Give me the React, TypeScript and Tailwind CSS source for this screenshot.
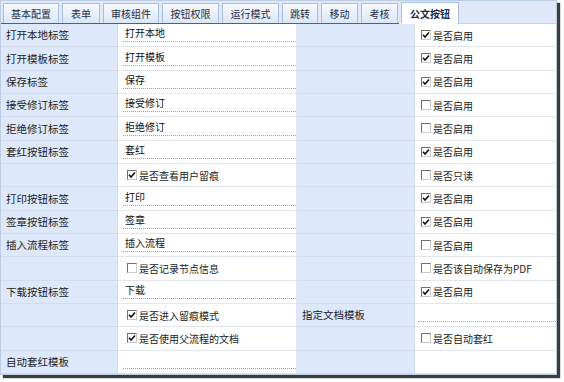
import React from 'react';

type Cell =
  | { kind: 'label'; text: string }
  | { kind: 'input'; value: string }
  | { kind: 'check'; text: string; checked: boolean }
  | { kind: 'empty' };

interface Row {
  label: string;
  main: Cell;
  side: Cell;
  extra: Cell;
}

const tabs = ['基本配置', '表单', '审核组件', '按钮权限', '运行模式', '跳转', '移动', '考核', '公文按钮'];
const tabWidths = ['w-[56px]', 'w-[38px]', 'w-[56px]', 'w-[57px]', 'w-[57px]', 'w-[36px]', 'w-[37px]', 'w-[37px]', 'w-[58px]'];

const en = (text: string): Cell => ({ kind: 'check', text, checked: true });
const dis = (text: string): Cell => ({ kind: 'check', text, checked: false });
const inp = (value: string): Cell => ({ kind: 'input', value });
const empty: Cell = { kind: 'empty' };

const rows: Row[] = [
  { label: '打开本地标签', main: inp('打开本地'), side: empty, extra: en('是否启用') },
  { label: '打开模板标签', main: inp('打开模板'), side: empty, extra: en('是否启用') },
  { label: '保存标签', main: inp('保存'), side: empty, extra: en('是否启用') },
  { label: '接受修订标签', main: inp('接受修订'), side: empty, extra: dis('是否启用') },
  { label: '拒绝修订标签', main: inp('拒绝修订'), side: empty, extra: dis('是否启用') },
  { label: '套红按钮标签', main: inp('套红'), side: empty, extra: en('是否启用') },
  { label: '', main: en('是否查看用户留痕'), side: empty, extra: dis('是否只读') },
  { label: '打印按钮标签', main: inp('打印'), side: empty, extra: en('是否启用') },
  { label: '签章按钮标签', main: inp('签章'), side: empty, extra: en('是否启用') },
  { label: '插入流程标签', main: inp('插入流程'), side: empty, extra: dis('是否启用') },
  { label: '', main: dis('是否记录节点信息'), side: empty, extra: dis('是否该自动保存为PDF') },
  { label: '下载按钮标签', main: inp('下载'), side: empty, extra: en('是否启用') },
  { label: '', main: en('是否进入留痕模式'), side: { kind: 'label', text: '指定文档模板' }, extra: inp('') },
  { label: '', main: en('是否使用父流程的文档'), side: empty, extra: dis('是否自动套红') },
  { label: '自动套红模板', main: inp(''), side: empty, extra: empty },
];

function CheckBox({ checked }: { checked: boolean }) {
  return (
    <span className="w-[10px] h-[10px] shrink-0 bg-white border border-t-[#6f6f6f] border-l-[#6f6f6f] border-r-[#c9c9c9] border-b-[#c9c9c9] flex items-center justify-center">
      {checked && (
        <svg width="8" height="8" viewBox="0 0 8 8">
          <path d="M1 3.8 L3 6 L7 1.5" stroke="#111" strokeWidth="1.6" fill="none" />
        </svg>
      )}
    </span>
  );
}

function CellBody({ cell, wide }: { cell: Cell; wide?: boolean }) {
  if (cell.kind === 'label') {
    return <span className="pl-[5px] text-[10.5px] text-[#222]">{cell.text}</span>;
  }
  if (cell.kind === 'input') {
    return (
      <div className={`${wide ? 'ml-[5px]' : 'ml-[3px]'} self-end mb-[4px] flex-1 h-[17px] border-b border-dotted border-[#8aa3c7] pl-[2px] text-[10px] leading-[16px] text-[#111]`}>
        {cell.value}
      </div>
    );
  }
  if (cell.kind === 'check') {
    return (
      <div className={`${wide ? 'pl-[9px]' : 'pl-[6px]'} flex items-center gap-[2px] text-[10px] text-[#222]`}>
        <CheckBox checked={cell.checked} />
        <span>{cell.text}</span>
      </div>
    );
  }
  return null;
}

export default function App() {
  return (
    <div className="w-[564px] h-[382px] bg-white" style={{ fontFamily: '"Noto Sans CJK SC", "Liberation Sans", sans-serif' }}>
      <div className="w-[557px] border border-[#bccde6] shadow-[3px_3px_1px_#3c3c3c]">
        {/* onglets */}
        <div className="h-[22px] bg-[#dfe8f6] flex items-end gap-[3px] pl-[2px]">
          {tabs.map((t, i) => {
            const active = i === tabs.length - 1;
            return (
              <div
                key={t}
                className={`${tabWidths[i]} ${
                  active
                    ? 'h-[21px] bg-white font-bold text-[#1b2c48] border-[#a8bfdf]'
                    : 'h-[20px] bg-gradient-to-b from-[#f7f9fd] to-[#dbe6f5] text-[#1f2f48] border-[#a8bfdf]'
                } border border-b-0 flex items-center justify-center text-[10px]`}
              >
                {t}
              </div>
            );
          })}
        </div>
        <div className="flex h-px">
          <div className="w-[398px] bg-[#5f5f5f]" />
          <div className="w-[58px] bg-white" />
          <div className="flex-1 bg-[#c3d3ea]" />
        </div>

        {/* tableau */}
        <div className="grid grid-cols-[117px_179px_118px_1fr] grid-rows-[repeat(15,minmax(0,1fr))] h-[350px]">
          {rows.map((r, i) => (
            <React.Fragment key={i}>
              <div className="bg-[#dde8fb] border-b border-r border-[#d3dce8] flex items-center">
                {r.label && <span className="pl-[5px] text-[10.5px] text-[#222]">{r.label}</span>}
              </div>
              <div className="bg-white border-b border-r border-[#e1e6ee] flex items-center">
                <CellBody cell={r.main} wide />
              </div>
              <div className="bg-[#dde8fb] border-b border-r border-[#d3dce8] flex items-center">
                <CellBody cell={r.side} />
              </div>
              <div className="bg-white border-b border-[#e1e6ee] flex items-center">
                <CellBody cell={r.extra} />
              </div>
            </React.Fragment>
          ))}
        </div>
      </div>
    </div>
  );
}
